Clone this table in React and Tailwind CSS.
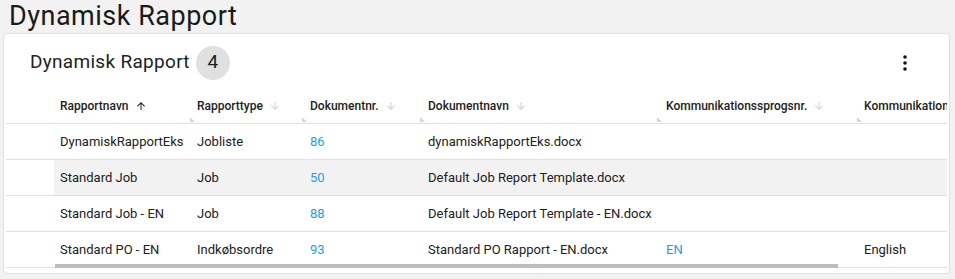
import React from "react";

const cols = [
  { key: "sel", w: "w-[48px]", pl: "pl-[6px]", label: "" },
  { key: "navn", w: "w-[136px]", pl: "pl-[6px]", label: "Rapportnavn", sort: "up" },
  { key: "type", w: "w-[112px]", pl: "pl-[7px]", label: "Rapporttype", sort: "down" },
  { key: "nr", w: "w-[118px]", pl: "pl-[8px]", label: "Dokumentnr.", sort: "down" },
  { key: "dnavn", w: "w-[237px]", pl: "pl-[8px]", label: "Dokumentnavn", sort: "down" },
  { key: "ksnr", w: "w-[200px]", pl: "pl-[9px]", label: "Kommunikationssprogsnr.", sort: "down" },
  { key: "ks", w: "w-[200px]", pl: "pl-[7px]", label: "Kommunikationssprog", sort: "down" },
];

const rows = [
  { navn: "DynamiskRapportEks", type: "Jobliste", nr: "86", dnavn: "dynamiskRapportEks.docx", ksnr: "", ks: "" },
  { navn: "Standard Job", type: "Job", nr: "50", dnavn: "Default Job Report Template.docx", ksnr: "", ks: "", hover: true },
  { navn: "Standard Job - EN", type: "Job", nr: "88", dnavn: "Default Job Report Template - EN.docx", ksnr: "", ks: "" },
  { navn: "Standard PO - EN", type: "Indkøbsordre", nr: "93", dnavn: "Standard PO Rapport - EN.docx", ksnr: "EN", ks: "English" },
];

function Arrow({ dir }) {
  const up = dir === "up";
  return (
    <svg width="12" height="12" viewBox="0 0 24 24" className={up ? "text-[#212121]" : "text-[#d0d0d0]"}>
      {up ? (
        <path d="M4 12l1.41 1.41L11 7.83V20h2V7.83l5.58 5.59L20 12l-8-8-8 8z" fill="currentColor" />
      ) : (
        <path d="M20 12l-1.41-1.41L13 16.17V4h-2v12.17l-5.58-5.59L4 12l8 8 8-8z" fill="currentColor" />
      )}
    </svg>
  );
}

export default function App() {
  return (
    <div className="min-h-[279px] w-[955px] bg-[#f2f2f2] font-['Roboto',sans-serif] text-[#212121] overflow-hidden">
      <h1 className="pl-[9px] text-[27px] tracking-[0.5px] leading-[32px] h-[33px] font-normal text-[#1a1a1a]">Dynamisk Rapport</h1>
      <div className="ml-[3px] w-[947px] h-[241px] bg-white border border-[#e0e0e0] rounded-[4px] px-[2px] relative overflow-hidden">
        <div className="flex items-center h-[54px] pl-[24px] pr-[39px] pt-[3px]">
          <span className="text-[19px] tracking-[0.3px] text-[#222]">Dynamisk Rapport</span>
          <span className="ml-[6px] w-[34px] h-[34px] rounded-full bg-[#e0e0e0] flex items-center justify-center text-[19px] text-[#222]">4</span>
          <div className="ml-auto flex items-center">
            <svg width="6" height="18" viewBox="0 0 6 18">
              <circle cx="3" cy="3" r="1.8" fill="#111" />
              <circle cx="3" cy="9" r="1.8" fill="#111" />
              <circle cx="3" cy="15" r="1.8" fill="#111" />
            </svg>
          </div>
        </div>
        <div className="overflow-hidden">
          <div className="flex h-[36px] border-b border-[#e0e0e0] w-max">
            {cols.map((c, i) => (
              <div key={c.key} className={`${c.w} ${c.pl} shrink-0 relative flex items-center text-[12px] font-medium text-[#212121]`}>
                {c.label && (
                  <>
                    <span className="whitespace-nowrap">{c.label}</span>
                    <span className="ml-[6px] flex items-center"><Arrow dir={c.sort} /></span>
                  </>
                )}
                {i >= 2 && (
                  <span className="absolute left-0 bottom-[1px] w-0 h-0 border-l-[5px] border-l-transparent border-b-[5px] border-b-[#d6d6d6] rotate-90 origin-center" />
                )}
              </div>
            ))}
          </div>
          {rows.map((r, idx) => (
            <div key={idx} className="flex h-[36px] border-b border-[#e0e0e0] w-max text-[13px]">
              {cols.map((c) => {
                const v = r[c.key] || "";
                const isLink = c.key === "nr" || c.key === "ksnr";
                return (
                  <div
                    key={c.key}
                    className={`${c.w} ${c.pl} shrink-0 flex items-center whitespace-nowrap ${r.hover && c.key !== "sel" ? "bg-[#f2f2f2]" : ""} ${isLink ? "text-[#1a9fea]" : "text-[#212121]"}`}
                  >
                    {v}
                  </div>
                );
              })}
            </div>
          ))}
        </div>
        <div className="absolute left-[51px] top-[230px] w-[783px] h-[4px] bg-[#bdbdbd]" />
      </div>
    </div>
  );
}
